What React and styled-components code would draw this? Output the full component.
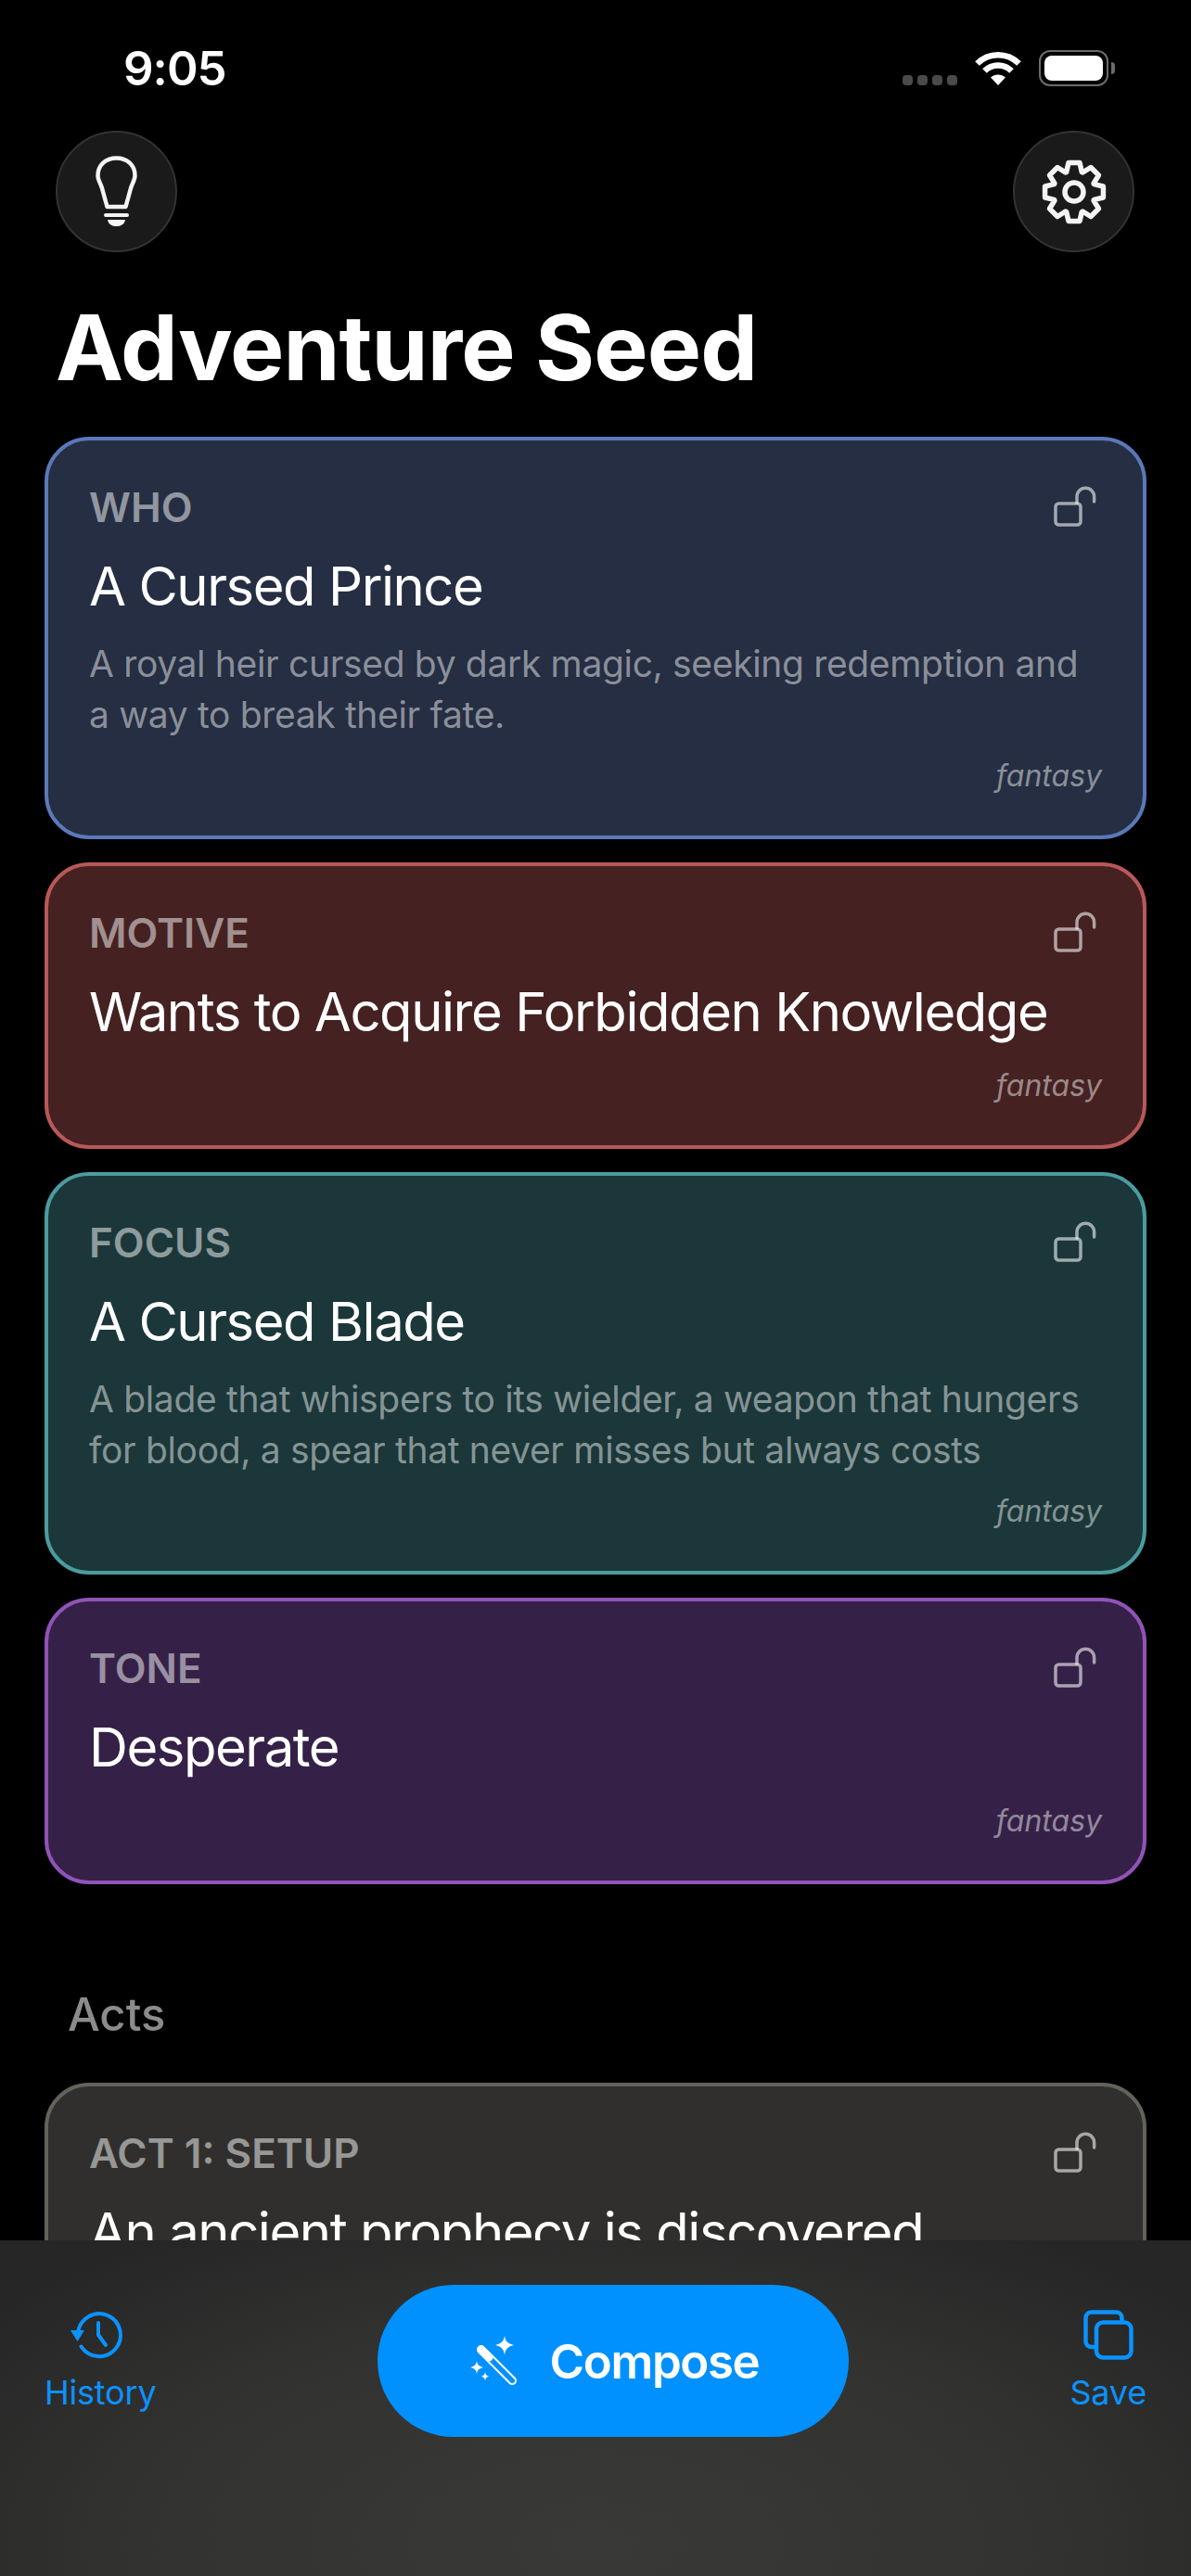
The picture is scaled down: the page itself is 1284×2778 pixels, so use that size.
import React from 'react'
import styled, { createGlobalStyle } from 'styled-components'

const GlobalStyle = createGlobalStyle`
    html, body {
        margin: 0;
        padding: 0;
        background: #000;
    }
    body {
        font-family: Inter, "Noto Sans", sans-serif;
        color: #fff;
    }
`

const seeds = [
    {
        label: 'WHO',
        title: 'A Cursed Prince',
        desc: 'A royal heir cursed by dark magic, seeking redemption and a way to break their fate.',
        bg: '#252e42',
        line: '#5b78b9',
    },
    {
        label: 'MOTIVE',
        title: 'Wants to Acquire Forbidden Knowledge',
        bg: '#452122',
        line: '#b95858',
    },
    {
        label: 'FOCUS',
        title: 'A Cursed Blade',
        desc: 'A blade that whispers to its wielder, a weapon that hungers for blood, a spear that never misses but always costs',
        bg: '#1b3739',
        line: '#4a9ca0',
    },
    {
        label: 'TONE',
        title: 'Desperate',
        bg: '#352147',
        line: '#9053b8',
    },
]

// eight tooth outline for the settings button
const gearPoints = () => {
    const pts = []
    for (let i = 0; i < 8; i++) {
        const a = (i * Math.PI) / 4 - Math.PI / 2
        const spots = [
            [-0.37, 23],
            [-0.19, 32],
            [0.19, 32],
            [0.37, 23],
        ]
        spots.forEach(([off, r]) => {
            pts.push(`${(35 + r * Math.cos(a + off)).toFixed(2)},${(35 + r * Math.sin(a + off)).toFixed(2)}`)
        })
    }
    return pts.join(' ')
}

const LockIcon = () => (
    <LockSvg viewBox="0 0 46 44" fill="none" stroke="currentColor" strokeWidth="3.5" strokeLinecap="round">
        <rect x="2" y="19" width="27" height="23" rx="3.5" />
        <path d="M25 18V11.5a9.3 9.3 0 0 1 18.6 0V17" />
    </LockSvg>
)

const Card = ({ label, title, desc, bg, line, footer }) => (
    <CardBox $bg={bg} $line={line}>
        <CardTop>
            <CardLabel>{label}</CardLabel>
            <LockIcon />
        </CardTop>
        <CardTitle>{title}</CardTitle>
        {desc && <CardDesc>{desc}</CardDesc>}
        {footer && <CardFooter>{footer}</CardFooter>}
    </CardBox>
)

const App = () => {
    return (
        <Screen>
            <GlobalStyle />
            <StatusBar>
                <Time>9:05</Time>
                <StatusIcons>
                    <SignalDots>
                        <i /><i /><i /><i />
                    </SignalDots>
                    <svg width="52" height="37" viewBox="0 0 52 37" fill="none" stroke="#fff" strokeWidth="6.5">
                        <path d="M3.5 13.5C16 1 36 1 48.5 13.5" />
                        <path d="M11.5 21.5C19.5 13.5 32.5 13.5 40.5 21.5" />
                        <path d="M26 37L18 28.5C22.5 24.5 29.5 24.5 34 28.5Z" fill="#fff" stroke="none" />
                    </svg>
                    <Battery>
                        <BatteryFill />
                    </Battery>
                </StatusIcons>
            </StatusBar>

            <Header>
                <RoundButton>
                    <svg width="45" height="77" viewBox="0 0 45 77" fill="none" stroke="#f4f4f4" strokeWidth="4.5" strokeLinecap="round">
                        <path d="M12.5 55L7 35C5.500 30 2.500 26 2.500 21.500C2.500 10 11 2.500 22.500 2.500C34 2.500 42.500 10 42.500 21.500C42.500 26 39.500 30 38 35L32.500 55Z" strokeLinejoin="round" />
                        <path d="M11 64H34" strokeWidth="4" />
                        <path d="M13 69H32C31 74.500 26.500 76 22.500 76C18.500 76 14 74.500 13 69Z" fill="#f4f4f4" stroke="none" />
                    </svg>
                </RoundButton>
                <RoundButton>
                    <svg width="70" height="70" viewBox="0 0 70 70" fill="none" stroke="#f4f4f4" strokeWidth="5.5" strokeLinejoin="round">
                        <polygon points={gearPoints()} />
                        <circle cx="35" cy="35" r="10" />
                    </svg>
                </RoundButton>
            </Header>

            <Title>Adventure Seed</Title>

            <CardList>
                {seeds.map((s) => (
                    <Card key={s.label} {...s} footer="fantasy" />
                ))}
            </CardList>

            <SectionTitle>Acts</SectionTitle>

            <CardList>
                <Card
                    label="ACT 1: SETUP"
                    title="An ancient prophecy is discovered"
                    bg="#302f2d"
                    line="#63635c"
                />
            </CardList>

            <BottomBar>
                <TabButton>
                    <HistoryIcon>
                        <svg width="58" height="54" viewBox="0 0 58 54" fill="none" stroke="#0a93ff" strokeWidth="4" strokeLinecap="round" strokeLinejoin="round">
                            <path d="M8 25A23 23 0 1 1 11.500 39.500" />
                            <path d="M30 14V27L38 38" />
                            <path d="M0 22H15L7.500 34Z" fill="#0a93ff" stroke="none" />
                        </svg>
                    </HistoryIcon>
                    <TabLabel>History</TabLabel>
                </TabButton>

                <ComposeButton>
                    <svg width="52" height="54" viewBox="0 0 52 54" fill="#fff">
                        <path d="M37 0C38 6 40 8 47 10C40 12 38 14 37 21C36 14 34 12 27 10C34 8 36 6 37 0Z" />
                        <path d="M7 27C7.700 31 9 32.500 14 34C9 35.500 7.700 37 7 41C6.300 37 5 35.500 0 34C5 32.500 6.300 31 7 27Z" />
                        <path d="M16 39C16.500 42 17.500 43 20.500 43.800C17.500 44.500 16.500 45.500 16 48.500C15.500 45.500 14.500 44.500 11.500 43.800C14.500 43 15.500 42 16 39Z" />
                        <rect x="9" y="10" width="55" height="7.500" rx="3.750" transform="rotate(45 11 13)" fill="none" stroke="#fff" strokeWidth="2" />
                        <rect x="9" y="10" width="20" height="7.500" rx="3.750" transform="rotate(45 11 13)" />
                    </svg>
                    Compose
                </ComposeButton>

                <TabButton>
                    <TabIcon>
                        <svg width="54" height="54" viewBox="0 0 54 54" fill="none" stroke="#0a93ff" strokeWidth="4.500">
                            <path d="M12 40H9C5 40 2.500 37.500 2.500 34V9C2.500 5 5 2.500 9 2.500H35C39 2.500 41.500 5 41.500 9V13" />
                            <rect x="14" y="13.500" width="37.500" height="38" rx="7" />
                        </svg>
                    </TabIcon>
                    <TabLabel>Save</TabLabel>
                </TabButton>
            </BottomBar>
        </Screen>
    )
}

const Screen = styled.div`
    position: relative;
    width: 1284px;
    height: 2778px;
    overflow: hidden;
    background: #000;
`

const StatusBar = styled.div`
    height: 110px;
    padding: 36px 89px 0 133px;
    box-sizing: border-box;
    display: flex;
    align-items: center;
    justify-content: space-between;
`

const Time = styled.span`
    font-size: 51px;
    font-weight: 600;
    letter-spacing: -1px;
`

const StatusIcons = styled.div`
    display: flex;
    align-items: center;
    gap: 18px;
`

const SignalDots = styled.div`
    display: flex;
    gap: 5px;
    align-self: flex-end;
    margin-bottom: 1px;
    i {
        display: block;
        width: 11px;
        height: 11px;
        border-radius: 4px;
        background: #4a4a4a;
    }
`

const Battery = styled.div`
    position: relative;
    width: 75px;
    height: 39px;
    box-sizing: border-box;
    padding: 4px;
    border: 2px solid #6b6b6b;
    border-radius: 12px;
    &::after {
        content: '';
        position: absolute;
        right: -9px;
        top: 11px;
        width: 4px;
        height: 13px;
        border-radius: 0 4px 4px 0;
        background: #6b6b6b;
    }
`

const BatteryFill = styled.div`
    width: 100%;
    height: 100%;
    background: #fff;
    border-radius: 8px;
`

const Header = styled.div`
    margin-top: 31px;
    padding: 0 61px 0 60px;
    display: flex;
    justify-content: space-between;
`

const RoundButton = styled.div`
    width: 131px;
    height: 131px;
    box-sizing: border-box;
    border-radius: 50%;
    background: #1a1a1a;
    border: 2px solid #333;
    display: flex;
    align-items: center;
    justify-content: center;
`

const Title = styled.h1`
    margin: 48px 0 41px 60px;
    font-size: 98px;
    line-height: 110px;
    font-weight: 700;
    letter-spacing: -0.9px;
`

const CardList = styled.div`
    display: flex;
    flex-direction: column;
    gap: 25px;
    padding: 0 48px;
`

const CardBox = styled.div`
    box-sizing: border-box;
    padding: 48px 44px 44px;
    background: ${(p) => p.$bg};
    border: 4px solid ${(p) => p.$line};
    border-radius: 48px;
    display: flex;
    flex-direction: column;
`

const CardTop = styled.div`
    display: flex;
    align-items: flex-start;
    justify-content: space-between;
`

const CardLabel = styled.div`
    font-size: 44px;
    line-height: 48px;
    font-weight: 600;
    color: rgba(255, 255, 255, 0.5);
`

const LockSvg = styled.svg`
    width: 46px;
    height: 44px;
    margin: 1px 6px 0 0;
    color: rgba(255, 255, 255, 0.58);
`

const CardTitle = styled.div`
    margin-top: 25px;
    font-size: 58px;
    line-height: 72px;
    font-weight: 400;
    letter-spacing: -1.45px;
`

const CardDesc = styled.div`
    margin: 20px 0 -5px;
    font-size: 39px;
    line-height: 55px;
    letter-spacing: -0.34px;
    color: rgba(255, 255, 255, 0.47);
`

const CardFooter = styled.div`
    margin-top: 24px;
    text-align: right;
    font-size: 32px;
    line-height: 40px;
    font-style: italic;
    color: rgba(255, 255, 255, 0.47);
`

const SectionTitle = styled.div`
    margin: 112px 0 44px 73px;
    font-size: 49px;
    line-height: 58px;
    font-weight: 500;
    color: #8c8c8c;
`

const BottomBar = styled.div`
    position: absolute;
    left: 0;
    right: 0;
    bottom: 0;
    height: 362px;
    box-sizing: border-box;
    padding: 48px 48px 0;
    display: flex;
    justify-content: space-between;
    align-items: flex-start;
    background: radial-gradient(ellipse 65% 110% at 50% 90%, #393938 0%, #323231 60%, #262626 100%);
`

const TabButton = styled.div`
    margin-top: 27px;
    display: flex;
    flex-direction: column;
    align-items: center;
    color: #0a93ff;
`

const TabIcon = styled.div`
    height: 54px;
    display: flex;
    align-items: center;
    justify-content: center;
`

const HistoryIcon = styled(TabIcon)`
    margin-right: 6px;
`

const TabLabel = styled.div`
    margin-top: 13px;
    font-size: 36px;
    line-height: 44px;
    font-weight: 400;
    letter-spacing: -0.2px;
`

const ComposeButton = styled.div`
    width: 508px;
    height: 164px;
    box-sizing: border-box;
    padding-left: 3px;
    border-radius: 82px;
    background: #0091ff;
    display: flex;
    align-items: center;
    justify-content: center;
    gap: 34px;
    font-size: 51px;
    font-weight: 600;
    letter-spacing: -1.4px;
    color: #fff;
`

export default App
